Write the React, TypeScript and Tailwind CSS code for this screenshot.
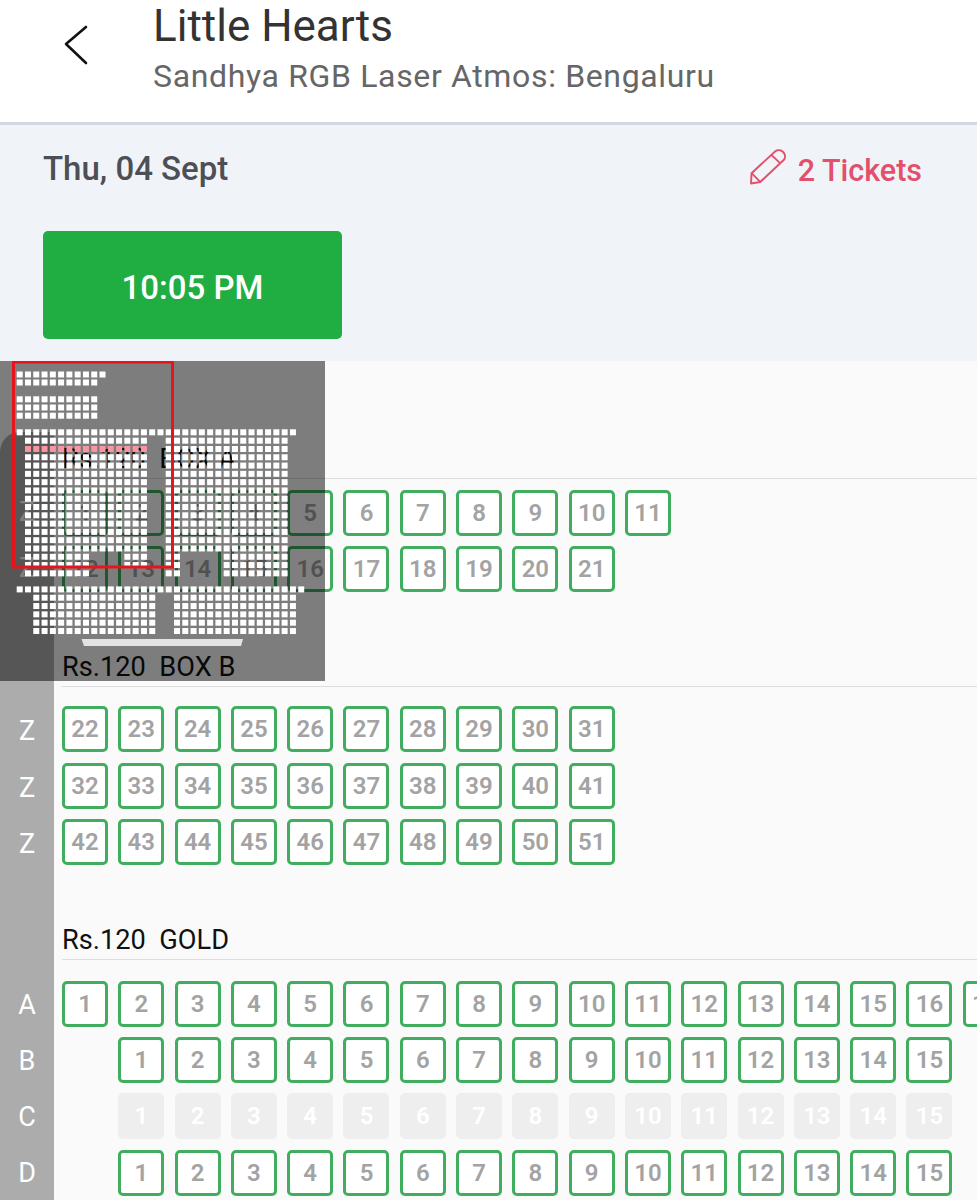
const font = { fontFamily: "Roboto, sans-serif" };

function range(from: number, to: number) {
  const out: number[] = [];
  for (let i = from; i <= to; i++) out.push(i);
  return out;
}

function Seat({ n, off }: { n?: number; off?: boolean }) {
  if (n === undefined) return <div className="w-[46px] h-[46px] shrink-0" />;
  return (
    <div
      className={
        off
          ? "w-[46px] h-[46px] shrink-0 rounded-[5px] bg-[#eeeeee] text-white flex items-center justify-center text-[24px] font-semibold"
          : "w-[46px] h-[46px] shrink-0 rounded-[5px] border-[3px] border-[#41ad5f] bg-white text-[#a3a3a3] flex items-center justify-center text-[24px] font-semibold"
      }
    >
      {n}
    </div>
  );
}

function SeatRow({ seats, off, skip }: { seats: number[]; off?: boolean; skip?: boolean }) {
  return (
    <div className="flex gap-[10.3px] h-[46px]">
      {skip && <Seat />}
      {seats.map((n) => (
        <Seat key={n} n={n} off={off} />
      ))}
    </div>
  );
}

function Heading({ children }: { children: string }) {
  return (
    <div className="h-[38px] border-b border-[#dddddd] text-[27.2px] leading-[36px] text-[#111] whitespace-pre">
      {children}
    </div>
  );
}

function RowLetters() {
  const rows: [string, number][] = [
    ["Z", 512],
    ["Z", 568],
    ["Z", 731],
    ["Z", 788],
    ["Z", 844],
    ["A", 1005],
    ["B", 1061],
    ["C", 1117],
    ["D", 1173],
  ];
  return (
    <div className="absolute left-0 top-[71px] w-[54px] h-[768px] bg-[#acacac] rounded-tl-[20px] text-white text-[27px]">
      {rows.map(([l, y], i) => (
        <span key={i} className="absolute left-0 w-[54px] text-center leading-[32px]" style={{ top: y - 432 - 16 }}>
          {l}
        </span>
      ))}
    </div>
  );
}

// seating plan thumbnail, dots on an 8.28px pitch
function MiniMap() {
  const dots: { x: number; y: number; pink?: boolean }[] = [];
  const P = 8.28;
  const add = (x0: number, y: number, count: number, pink?: boolean) => {
    for (let i = 0; i < count; i++) dots.push({ x: x0 + i * P, y, pink });
  };
  add(16.7, 10.5, 11);
  add(16.7, 18.5, 10);
  add(16.7, 35.3, 10);
  add(16.7, 43.5, 10);
  add(16.7, 51.7, 10);
  add(16.7, 68.3, 34);
  for (let r = 0; r < 17; r++) {
    const y = 76.7 + r * 8.29;
    const low = r >= 14;
    add(25, y, low ? 8 : 15, r === 1);
    if (low && r < 16) add(25 + 12 * P, y, 3);
    if (low) {
      add(165.7, y, 2);
      add(165.7 + 7 * P, y, 8);
    } else {
      add(165.7, y, 15);
    }
  }
  add(16.7, 225.4, 35);
  for (let r = 0; r < 5; r++) {
    const y = 233.7 + r * 8.33;
    add(33.3, y, 15);
    add(174, y, 15);
  }
  return (
    <div className="absolute left-0 top-[361px] w-[325px] h-[320px] bg-black/50">
      <svg width="325" height="320" className="block">
        {dots.map((d, i) => (
          <rect key={i} x={d.x} y={d.y} width="6" height="6" fill={d.pink ? "#f8959f" : "#ffffff"} />
        ))}
        <polygon points="81.5,278 243,278 241,285 84,285" fill="#e3e3e3" />
        <rect x="13.5" y="1" width="159" height="205" fill="none" stroke="#e8141c" strokeWidth="3" />
      </svg>
    </div>
  );
}

export default function App() {
  return (
    <div className="relative w-[977px] h-[1200px] overflow-hidden bg-[#fafafa]" style={font}>
      <header className="h-[125px] bg-white border-b-[3px] border-[#d2d7e2] flex">
        <div className="w-[153px] shrink-0 pt-[25px] pl-[63px]">
          <svg width="26" height="40" viewBox="0 0 26 40" fill="none" stroke="#111" strokeWidth="2.6" strokeLinecap="round" strokeLinejoin="round">
            <path d="M23 2 L3 19 L23 38" />
          </svg>
        </div>
        <div className="-mt-[2px]">
          <div className="text-[44px] leading-[56px] text-[#333]">Little Hearts</div>
          <div className="text-[32px] leading-[44px] text-[#666] tracking-[0.65px]">Sandhya RGB Laser Atmos: Bengaluru</div>
        </div>
      </header>

      <section className="h-[236px] bg-[#f0f4f9] px-[43px] pt-[23px]">
        <div className="flex items-center justify-between pr-[12px] h-[42px]">
          <span className="text-[33px] font-medium text-[#4d4f55]">Thu, 04 Sept</span>
          <span className="flex items-center gap-[12px] text-[#e2506c] text-[30.5px] font-medium">
            <svg className="-mt-[4px]" width="36" height="36" viewBox="0 0 35 35" fill="none" stroke="#e2506c" strokeWidth="1.9" strokeLinejoin="round">
              <path d="M1.5 23.5 L24.5 2.3 A6 6 0 0 1 33 10.5 L10 32 L1 33.5 Z" />
              <path d="M20.5 5.5 L29.5 14" />
              <path d="M1.5 23.5 L10 32" />
            </svg>
            <span className="mt-[4px]">2 Tickets</span>
          </span>
        </div>
        <button className="mt-[41px] w-[299px] h-[108px] pt-[5px] rounded-[5px] bg-[#20ad42] text-white text-[33px] font-medium">
          10:05 PM
        </button>
      </section>

      <main className="relative h-[839px]">
        <RowLetters />
        <div className="absolute left-[62px] top-0 w-[915px] overflow-hidden">
          <div className="pt-[80px]">
            <Heading>Rs.120  BOX A</Heading>
            <div className="mt-[11px] flex flex-col gap-[10.25px]">
              <SeatRow seats={range(1, 11)} />
              <SeatRow seats={range(12, 21)} />
            </div>
          </div>
          <div className="mt-[57px]">
            <Heading>Rs.120  BOX B</Heading>
            <div className="mt-[19px] flex flex-col gap-[10.25px]">
              <SeatRow seats={range(22, 31)} />
              <SeatRow seats={range(32, 41)} />
              <SeatRow seats={range(42, 51)} />
            </div>
          </div>
          <div className="mt-[57px]">
            <Heading>Rs.120  GOLD</Heading>
            <div className="mt-[21px] flex flex-col gap-[10.25px]">
              <SeatRow seats={range(1, 17)} />
              <SeatRow seats={range(1, 15)} skip />
              <SeatRow seats={range(1, 15)} skip off />
              <SeatRow seats={range(1, 15)} skip />
            </div>
          </div>
        </div>
      </main>

      <MiniMap />
    </div>
  );
}
